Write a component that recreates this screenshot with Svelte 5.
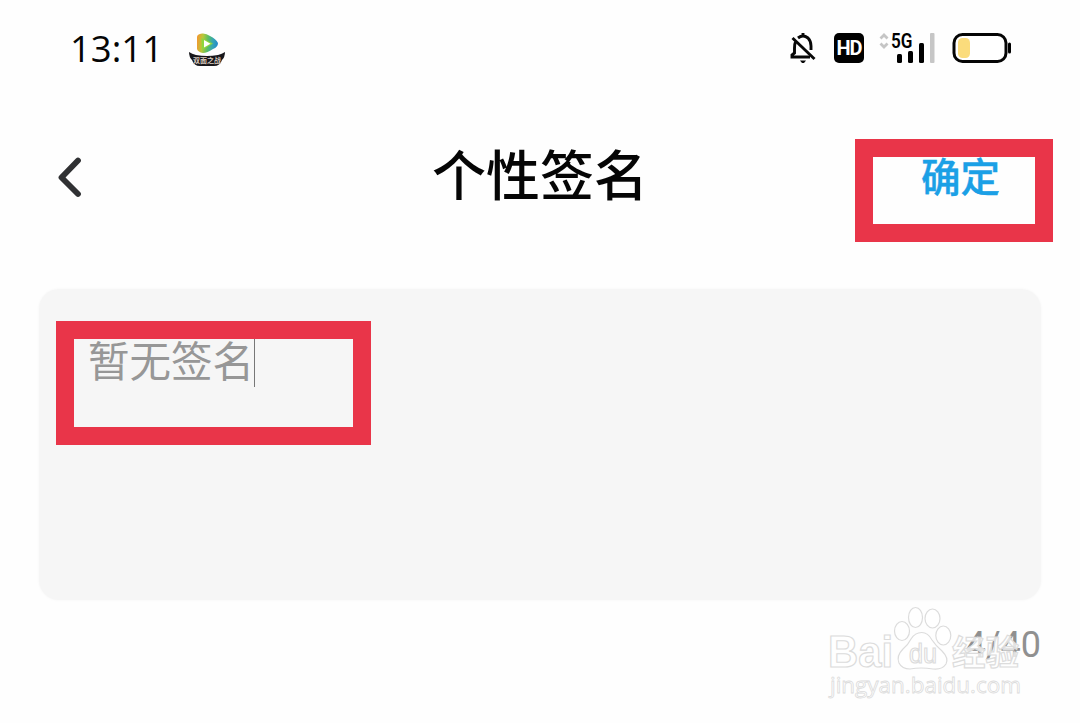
<script lang="ts">
  let signature = '暂无签名';
  const maxLength = 40;
</script>

<div class="screen">
  <div class="status-bar">
    <div class="status-left">
      <span class="time">13:11</span>
      <svg class="app-icon" width="38" height="36" viewBox="0 0 38 36">
        <defs>
          <linearGradient id="play" x1="0" y1="0.5" x2="1" y2="0.6">
            <stop offset="0" stop-color="#f09a30" />
            <stop offset="0.25" stop-color="#b5c93a" />
            <stop offset="0.5" stop-color="#5cbf62" />
            <stop offset="0.75" stop-color="#35a5b5" />
            <stop offset="1" stop-color="#2187cc" />
          </linearGradient>
        </defs>
        <path d="M9 5 Q9 2 14 1.5 Q18 1 22 4 Q28 7 30 11 Q30 15 25 17 Q19 21 15 21 Q10 20 9 17 Z" fill="url(#play)" />
        <path d="M13.5 6 L25 11.5 L14 18 Z" fill="#8ed63f" />
        <path d="M16 8 L22.5 11.8 L16 15.5 Z" fill="#fff" />
        <path d="M1 20 Q4 22 8 23 Q19 25 30 23 Q34 22 37 20 Q37 25 34 28 Q32 34 26 34 H12 Q6 34 4 28 Q1 25 1 20 Z" fill="#17171b" />
        <text x="19" y="31" text-anchor="middle">双面之战</text>
      </svg>
    </div>
    <div class="status-right">
      <svg width="26" height="32" viewBox="0 0 26 32" fill="none" stroke="#080808" stroke-width="2.9">
        <path d="M13 1 V4 M8 6 Q13 2 18 6 Q21 9 21 14 V18 M5.5 10 Q4.5 12 4.5 16 V21 L2 23 V25 H20" />
        <path d="M2.5 6 L24.5 27" />
        <path d="M10 28.5 H16 L14 31 H12 Z" fill="#080808" stroke="none" />
      </svg>
      <span class="hd">HD</span>
      <svg class="signal" width="56" height="42" viewBox="0 -6 56 42">
        <path d="M1.5 5.5 L5 2 L8.5 5.5 M1.5 10.5 L5 14 L8.5 10.5" fill="none" stroke="#c5c5c5" stroke-width="2.8" />
        <text x="12" y="15" textLength="21.5" lengthAdjust="spacingAndGlyphs">5G</text>
        <rect x="18" y="21" width="5" height="9" rx="1.5" />
        <rect x="29" y="18" width="5" height="12" rx="1.5" />
        <rect x="40" y="10" width="5" height="20" rx="1.5" />
        <rect x="51" y="0" width="4.5" height="30" rx="1" fill="#c6c6c6" />
      </svg>
      <svg width="60" height="32" viewBox="0 0 60 32">
        <rect x="2" y="2.5" width="52" height="27" rx="8.5" fill="#fff" stroke="#050505" stroke-width="3" />
        <rect x="6" y="6" width="12" height="20" rx="4.5" fill="#fbdc7c" />
        <rect x="56" y="10.5" width="3" height="11" rx="1.5" />
      </svg>
    </div>
  </div>

  <header class="nav">
    <button class="back" aria-label="返回">
      <svg width="28" height="44" viewBox="0 0 28 44">
        <path d="M21 5.5 L4.5 22.5 L21 39" fill="none" stroke="#303133" stroke-width="5.8" stroke-linecap="round" stroke-linejoin="round" />
      </svg>
    </button>
    <h1>个性签名</h1>
    <button class="confirm">确定<span class="mark mark-confirm"></span></button>
  </header>

  <main>
    <div class="editor">
      <span class="signature">{signature}</span><span class="caret"></span>
      <span class="mark mark-editor"></span>
    </div>
    <div class="counter">{signature.length}/{maxLength}</div>
  </main>

  <svg class="watermark" width="220" height="110" viewBox="0 0 220 110">
    <g class="outline">
      <text class="brand" x="-1" y="77" textLength="65" lengthAdjust="spacingAndGlyphs">Bai</text>
      <ellipse cx="73" cy="41" rx="7.5" ry="9.5" />
      <ellipse cx="86.5" cy="27.5" rx="7" ry="10" />
      <ellipse cx="103.5" cy="28.5" rx="7.5" ry="9.5" />
      <ellipse cx="114.3" cy="45.5" rx="7.5" ry="9.5" />
      <path d="M92.7 42.5 Q99 42.5 103 50 Q107 56 113 61 Q120 68 117 74 Q113 80 104 79 Q92 77 81 79 Q73 79 70 73 Q67 66 74 59 Q79 55 82 49 Q86 42.5 92.7 42.5 Z" />
      <text class="du" x="80" y="73" textLength="28" lengthAdjust="spacingAndGlyphs">du</text>
      <text class="jingyan" x="123" y="75" textLength="67" lengthAdjust="spacingAndGlyphs">经验</text>
      <text class="url" x="1" y="103" textLength="191" lengthAdjust="spacingAndGlyphs">jingyan.baidu.com</text>
    </g>
  </svg>
</div>

<style>
  :global(body) {
    margin: 0;
    background: #fff;
  }

  .screen {
    position: relative;
    box-sizing: border-box;
    width: 1080px;
    height: 723px;
    overflow: hidden;
    background: #fefefe;
    font-family: 'Noto Sans CJK SC', sans-serif;
  }

  .status-bar {
    display: flex;
    align-items: center;
    justify-content: space-between;
    box-sizing: border-box;
    height: 96px;
    padding: 0 68px 0 70px;
  }

  .status-left,
  .status-right {
    display: flex;
    align-items: center;
  }

  .time {
    width: 118px;
    font-family: 'Open Sans', sans-serif;
    font-size: 36.5px;
    line-height: 50px;
    color: #050505;
  }

  .app-icon {
    margin-top: 4px;
  }

  .app-icon text {
    font-size: 7px;
    font-weight: 700;
    fill: #d9c9bd;
  }

  .hd {
    width: 30px;
    height: 30px;
    margin: 0 15px 0 18px;
    border-radius: 5px;
    background: #000;
    color: #fff;
    font: 700 20px/30px Roboto, sans-serif;
    letter-spacing: -1px;
    text-align: center;
  }

  .signal {
    margin-right: 17px;
  }

  .signal text {
    font: 600 20px Roboto, sans-serif;
  }

  .nav {
    display: grid;
    grid-template-columns: 200px 1fr 200px;
    align-items: center;
    height: 162px;
  }

  h1 {
    margin: -8px 0 0;
    font-size: 54px;
    font-weight: 500;
    line-height: 80px;
    text-align: center;
    color: #050505;
  }

  button {
    padding: 0;
    border: 0;
    background: none;
    font-family: inherit;
  }

  .back {
    display: flex;
    padding-left: 57px;
  }

  .confirm {
    position: relative;
    justify-self: end;
    margin: -4px 80px 0 0;
    font-size: 39.5px;
    font-weight: 500;
    line-height: 58px;
    color: #1ba0e6;
    -webkit-text-stroke: 0.4px #1ba0e6;
  }

  .mark {
    position: absolute;
    box-sizing: border-box;
    border: 18px solid #e93549;
  }

  .mark-confirm {
    left: -66px;
    top: -7px;
    width: 198px;
    height: 103px;
  }

  main {
    padding: 31px 39px 0;
  }

  .editor {
    position: relative;
    display: flex;
    align-items: flex-start;
    box-sizing: border-box;
    height: 311px;
    padding: 50px 49px;
    border-radius: 20px;
    background: #f6f6f6;
    box-shadow: 0 0 3px #f6f6f6;
  }

  .signature {
    margin-top: -1px;
    font-size: 41.5px;
    line-height: 42px;
    color: #979797;
  }

  .caret {
    width: 1px;
    height: 48px;
    background: #777;
  }

  .mark-editor {
    left: 17px;
    top: 32px;
    width: 315px;
    height: 124px;
  }

  .counter {
    margin-top: 23px;
    font-family: Roboto, sans-serif;
    font-size: 36px;
    line-height: 44px;
    text-align: right;
    color: #909090;
  }

  .watermark {
    position: absolute;
    left: 829px;
    top: 590px;
    overflow: visible;
  }

  .outline {
    fill: #fff;
    stroke: #dcdcdc;
    stroke-width: 1.2;
  }

  .brand {
    font: 700 44px 'Liberation Sans', sans-serif;
  }

  .du {
    font: 400 27px 'Liberation Sans', sans-serif;
  }

  .jingyan {
    font-size: 34px;
    font-weight: 700;
    fill-opacity: 0.75;
  }

  .url {
    font: 400 22px 'Open Sans', sans-serif;
    stroke-width: 0.8;
  }
</style>
